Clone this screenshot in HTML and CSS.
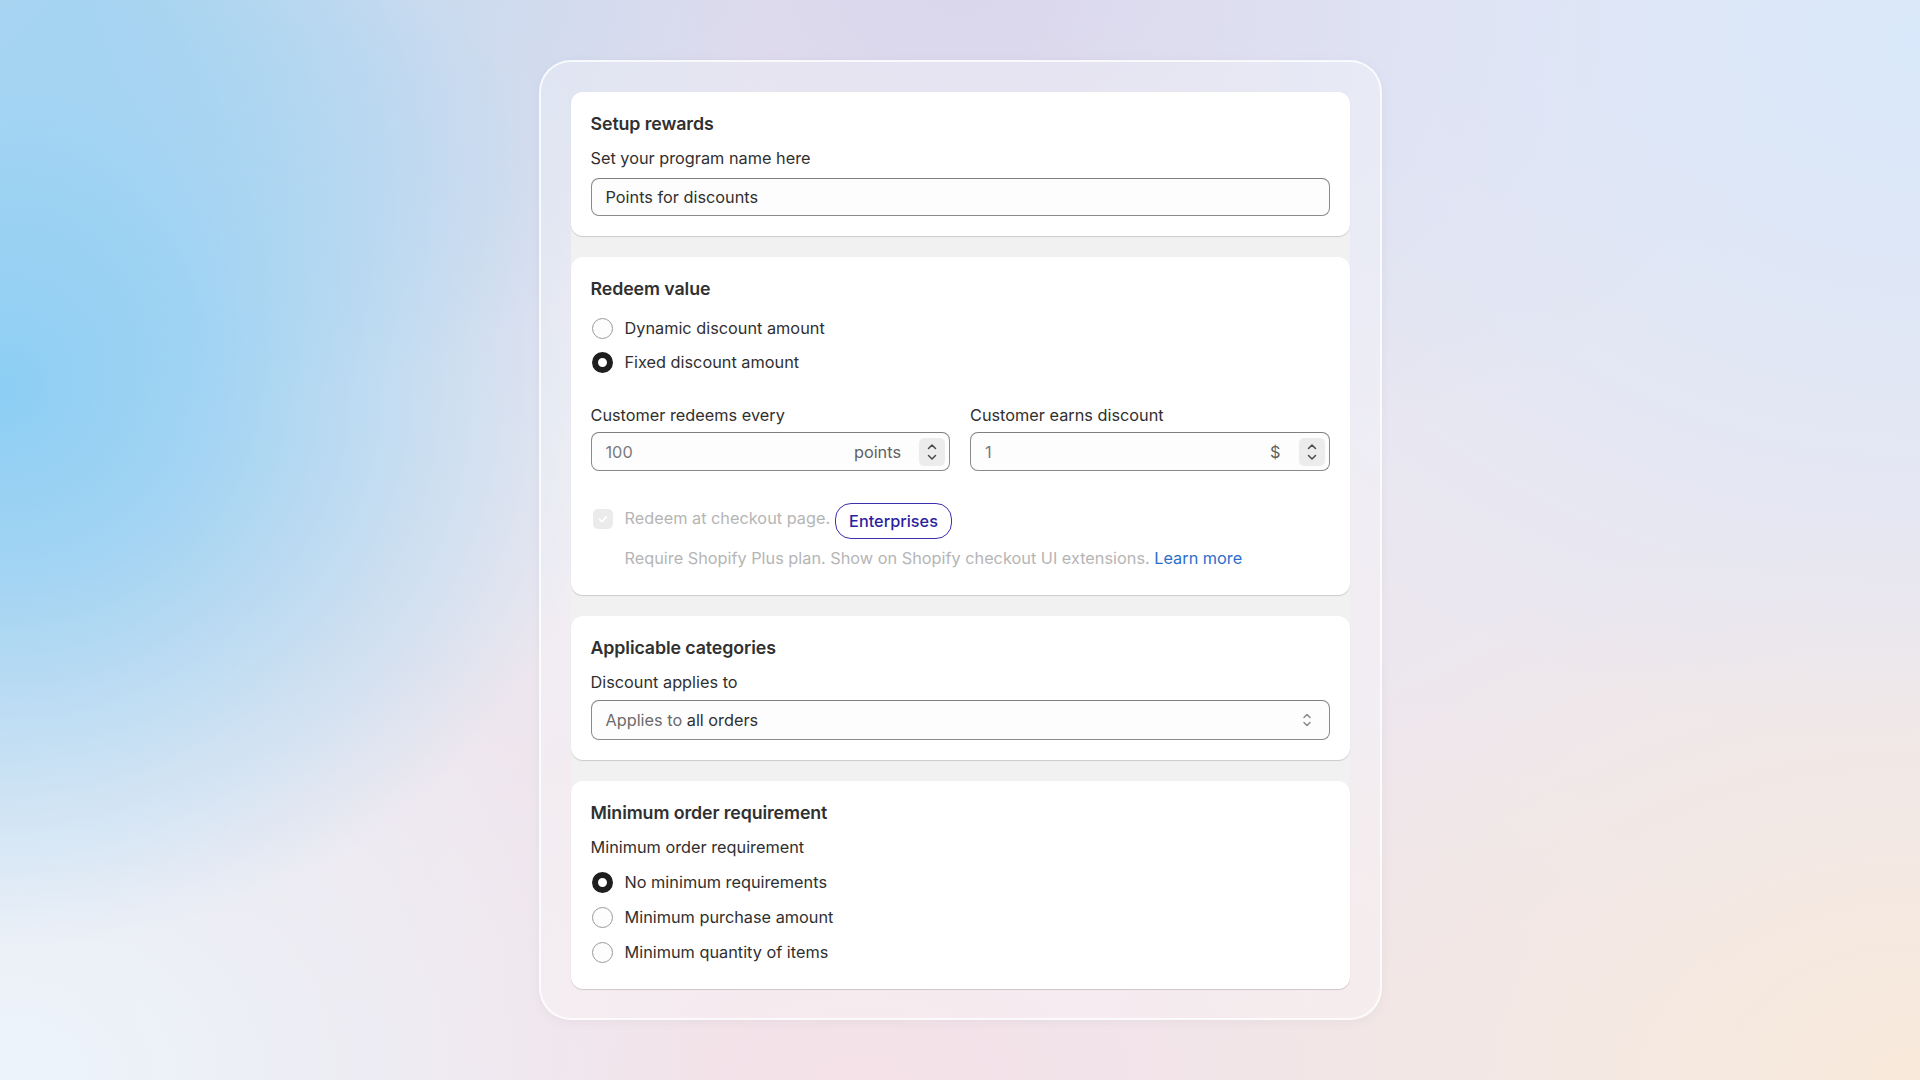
FILE: index.html
```html
<!DOCTYPE html>
<html lang="en">
<head>
<meta charset="utf-8">
<title>Setup rewards</title>
<link rel="stylesheet" href="styles.css">
</head>
<body>
<div class="stage">
  <div class="frame">
    <div class="page">
      <section class="card card-setup">
        <h2 class="card-title">Setup rewards</h2>
        <div class="field-label gap-title">Set your program name here</div>
        <div class="text-input">
          <span class="value">Points for discounts</span>
        </div>
      </section>

      <section class="card card-redeem">
        <h2 class="card-title">Redeem value</h2>
        <div class="radio-group rg-redeem">
          <div class="radio-row"><span class="radio"></span><span class="radio-text">Dynamic discount amount</span></div>
          <div class="radio-row"><span class="radio checked"></span><span class="radio-text">Fixed discount amount</span></div>
        </div>
        <div class="two-cols">
          <div class="col">
            <div class="field-label">Customer redeems every</div>
            <div class="text-input num-input">
              <span class="value muted-val">100</span>
              <span class="suffix">points</span>
              <span class="stepper">
                <svg width="12" height="24" viewBox="0 0 12 24"><path d="M2.5 8.5 L6 5 L9.5 8.5" fill="none" stroke="#4a4a4a" stroke-width="1.5" stroke-linecap="round" stroke-linejoin="round"/><path d="M2.5 15.5 L6 19 L9.5 15.5" fill="none" stroke="#4a4a4a" stroke-width="1.5" stroke-linecap="round" stroke-linejoin="round"/></svg>
              </span>
            </div>
          </div>
          <div class="col">
            <div class="field-label">Customer earns discount</div>
            <div class="text-input num-input">
              <span class="value muted-val">1</span>
              <span class="suffix">$</span>
              <span class="stepper">
                <svg width="12" height="24" viewBox="0 0 12 24"><path d="M2.5 8.5 L6 5 L9.5 8.5" fill="none" stroke="#4a4a4a" stroke-width="1.5" stroke-linecap="round" stroke-linejoin="round"/><path d="M2.5 15.5 L6 19 L9.5 15.5" fill="none" stroke="#4a4a4a" stroke-width="1.5" stroke-linecap="round" stroke-linejoin="round"/></svg>
              </span>
            </div>
          </div>
        </div>
        <div class="check-row">
          <span class="checkbox">
            <svg width="12" height="12" viewBox="0 0 12 12"><path d="M2.5 6.3 L5 8.6 L9.5 3.6" fill="none" stroke="#ffffff" stroke-width="1.6" stroke-linecap="round" stroke-linejoin="round"/></svg>
          </span>
          <span class="check-text">Redeem at checkout page.</span>
          <span class="pill">Enterprises</span>
        </div>
        <div class="help-text">Require Shopify Plus plan. Show on Shopify checkout UI extensions. <a class="link" href="#">Learn more</a></div>
      </section>

      <section class="card card-cats">
        <h2 class="card-title">Applicable categories</h2>
        <div class="field-label gap-title">Discount applies to</div>
        <div class="text-input select-input">
          <span class="value"><span class="soft">Applies to</span> all orders</span>
          <svg class="select-icon" width="12" height="18" viewBox="0 0 12 18"><path d="M3 6.5 L6 3.5 L9 6.5" fill="none" stroke="#8a8a8a" stroke-width="1.5" stroke-linecap="round" stroke-linejoin="round"/><path d="M3 11.5 L6 14.5 L9 11.5" fill="none" stroke="#8a8a8a" stroke-width="1.5" stroke-linecap="round" stroke-linejoin="round"/></svg>
        </div>
      </section>

      <section class="card card-min">
        <h2 class="card-title">Minimum order requirement</h2>
        <div class="field-label gap-title">Minimum order requirement</div>
        <div class="radio-group rg-min">
          <div class="radio-row"><span class="radio checked"></span><span class="radio-text">No minimum requirements</span></div>
          <div class="radio-row"><span class="radio"></span><span class="radio-text">Minimum purchase amount</span></div>
          <div class="radio-row"><span class="radio"></span><span class="radio-text">Minimum quantity of items</span></div>
        </div>
      </section>
    </div>
  </div>
</div>
</body>
</html>
```

FILE: styles.css
```css
* { box-sizing: border-box; }

html, body {
  margin: 0;
  padding: 0;
}

body {
  width: 1920px;
  height: 1080px;
  overflow: hidden;
  font-family: Inter, "Noto Sans", "Liberation Sans", sans-serif;
  color: #303030;
  background-color: #ece7ef;
  background-image:
    radial-gradient(ellipse 620px 560px at 0% 36%, rgba(140, 206, 244, 1) 0%, rgba(140, 206, 244, 0.75) 35%, rgba(140, 206, 244, 0) 100%),
    radial-gradient(ellipse 700px 420px at 4% 0%, rgba(170, 212, 240, 0.9) 0%, rgba(170, 212, 240, 0) 100%),
    radial-gradient(ellipse 900px 700px at 100% 4%, rgba(216, 232, 251, 0.95) 0%, rgba(216, 232, 251, 0) 100%),
    radial-gradient(ellipse 820px 560px at 100% 100%, rgba(248, 233, 218, 1) 0%, rgba(248, 233, 218, 0) 100%),
    radial-gradient(ellipse 700px 520px at 0% 100%, rgba(236, 244, 251, 1) 0%, rgba(236, 244, 251, 0) 100%),
    radial-gradient(ellipse 900px 500px at 50% 0%, rgba(218, 214, 236, 1) 0%, rgba(218, 214, 236, 0) 100%),
    radial-gradient(ellipse 900px 520px at 45% 100%, rgba(244, 226, 232, 1) 0%, rgba(244, 226, 232, 0) 100%);
}

.stage {
  display: flex;
  justify-content: center;
  padding-top: 60px;
}

.frame {
  width: 843px;
  height: 960px;
  padding: 30px;
  border: 2px solid rgba(255, 255, 255, 0.75);
  border-radius: 32px;
  background: rgba(255, 255, 255, 0.28);
  box-shadow: 0 2px 10px rgba(120, 110, 140, 0.08);
}

.page {
  background: #f1f1f1;
  border-radius: 12px;
  display: flex;
  flex-direction: column;
  gap: 21px;
}

.card {
  background: #ffffff;
  border-radius: 12px;
  padding: 20px 20px 20px;
  box-shadow: 0 1px 0 rgba(0, 0, 0, 0.10), 0 1px 2px rgba(0, 0, 0, 0.06);
}

.card-redeem { padding-bottom: 25px; }
.card-min { padding-bottom: 25px; }

.card-title {
  margin: 0;
  font-size: 17.8px;
  line-height: 24px;
  font-weight: 600;
  color: #303030;
  letter-spacing: -0.1px;
}

.field-label {
  font-size: 16.3px;
  line-height: 24px;
  color: #303030;
}

.gap-title { margin-top: 10px; }

.text-input {
  margin-top: 6px;
  height: 38px;
  border: 1px solid #8a8a8a;
  border-top-color: #7f7f7f;
  border-radius: 8px;
  background: #fdfdfd;
  display: flex;
  align-items: center;
  padding: 0 14px;
  font-size: 16.3px;
  color: #303030;
}

.card-setup .text-input { margin-top: 8px; }

.select-input {
  height: 40px;
  margin-top: 6px;
  justify-content: space-between;
  padding-right: 16px;
}

.soft { color: #6b6b6b; }

.value { flex: 1; }

.muted-val { color: #7a7a7a; }

.num-input {
  margin-top: 5px;
  height: 39px;
  padding-right: 4px;
}

.suffix {
  color: #616161;
  margin-right: 18px;
}

.stepper {
  width: 26px;
  height: 28px;
  border-radius: 5px;
  background: #ececec;
  display: flex;
  align-items: center;
  justify-content: center;
}

.radio-group {
  display: flex;
  flex-direction: column;
}

.rg-redeem { margin-top: 15px; gap: 10px; }
.rg-min { margin-top: 11px; gap: 11px; }

.radio-row {
  display: flex;
  align-items: center;
  height: 24px;
  font-size: 16.3px;
}

.radio {
  width: 21px;
  height: 21px;
  border-radius: 50%;
  border: 1.5px solid #9a9a9a;
  background: #fdfdfd;
  margin-left: 1px;
  margin-right: 12px;
  flex: none;
}

.radio.checked {
  border: 6px solid #1e1e1e;
  background: #ffffff;
}

.radio-text { color: #303030; }

.two-cols {
  margin-top: 29px;
  display: grid;
  grid-template-columns: 1fr 1fr;
  gap: 20px;
}

.check-row {
  margin-top: 32px;
  height: 36px;
  display: flex;
  align-items: center;
  font-size: 16.3px;
}

.checkbox {
  width: 20px;
  height: 20px;
  border-radius: 5px;
  background: #ebebeb;
  margin-left: 2px;
  margin-right: 12px;
  display: flex;
  align-items: center;
  justify-content: center;
  flex: none;
  margin-top: -4px;
}

.check-text {
  color: #b5b5b5;
  margin-top: -6px;
}

.pill {
  margin-left: 5px;
  height: 36px;
  padding: 0 13px;
  border: 1.5px solid #3b2fae;
  border-radius: 16px;
  color: #2d1f9e;
  font-weight: 500;
  display: flex;
  align-items: center;
}

.help-text {
  margin-top: 7px;
  padding-left: 34px;
  font-size: 16.3px;
  line-height: 24px;
  color: #b5b5b5;
}

.link {
  color: #2c6ecb;
  text-decoration: none;
}
```
